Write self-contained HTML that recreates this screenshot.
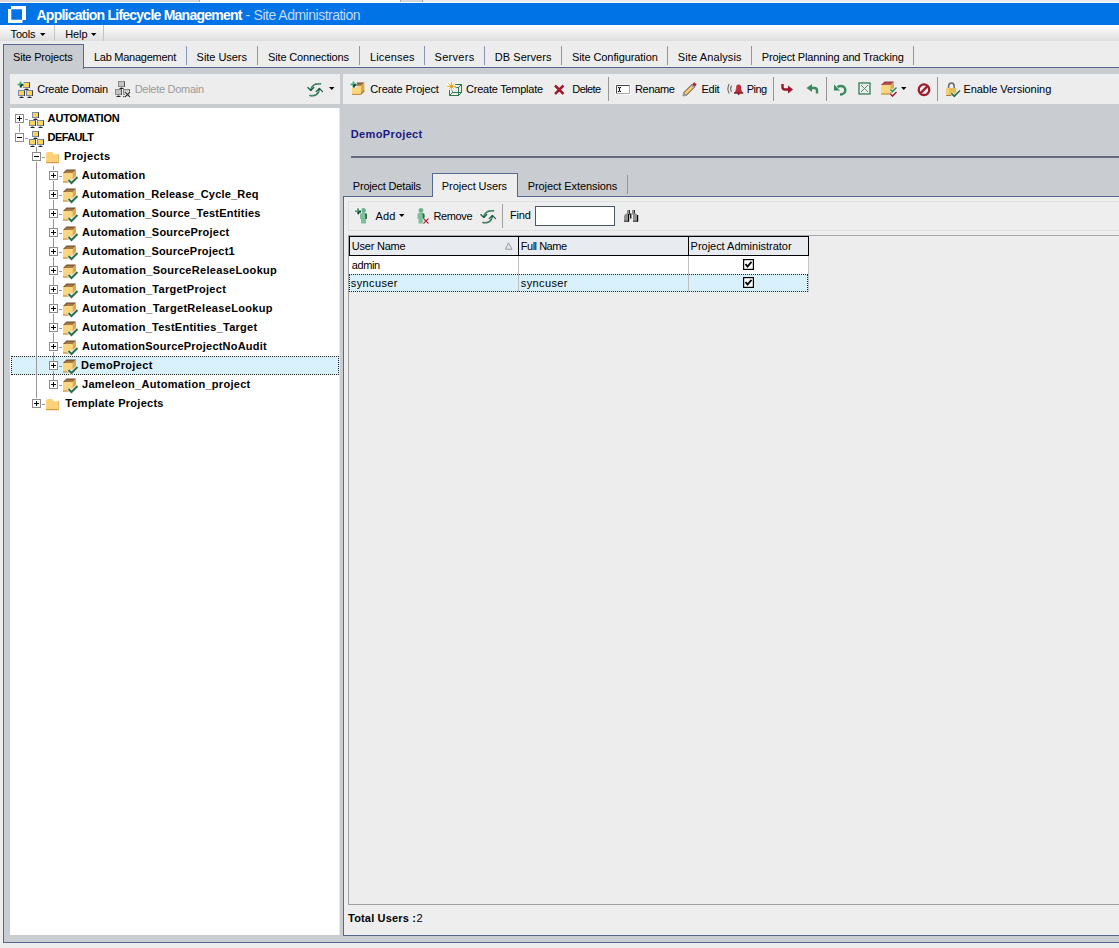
<!DOCTYPE html>
<html><head><meta charset="utf-8"><style>
html,body{margin:0;padding:0}
body{width:1119px;height:948px;overflow:hidden;position:relative;background:#ededed;font-family:"Liberation Sans",sans-serif}
.a{position:absolute}
.t{white-space:pre}
svg{overflow:visible}
</style></head><body>
<div class="a" style="left:0px;top:0px;width:1119px;height:3px;background:#ececec;"></div>
<div class="a" style="left:0px;top:0px;width:200px;height:2px;background:#d9d9d9;border-right:1px solid #a8a8a8;box-sizing:border-box"></div>
<div class="a" style="left:200px;top:0px;width:200px;height:2px;background:#ffffff;"></div>
<div class="a" style="left:400px;top:0px;width:23px;height:2px;background:#d9d9d9;border-left:1px solid #a8a8a8;border-right:1px solid #a8a8a8;box-sizing:border-box"></div>
<div class="a" style="left:0px;top:2px;width:1119px;height:1px;background:#fafafa;"></div>
<div class="a" style="left:0px;top:3px;width:1119px;height:22px;background:#0073e7;"></div>
<svg class="a" style="left:0;top:0" width="30" height="26"><path d="M11 6H26V20H22.5V23H8V9H11Z M11.3 9.2V19.8H22V9.2Z" fill="#fff" fill-rule="evenodd"/></svg>
<div class="a" style="left:0px;top:25px;width:1119px;height:16px;background:linear-gradient(#ffffff,#f4f4f4 30%,#dedede);"></div>
<div class="a" style="left:54px;top:25px;width:1px;height:16px;background:#c4c4c4;"></div>
<div class="a" style="left:103px;top:25px;width:1px;height:16px;background:#c4c4c4;"></div>
<svg class="a" style="left:40px;top:33px" width="6" height="4"><path d="M0 0H5.5L2.75 3Z" fill="#000"/></svg>
<svg class="a" style="left:91px;top:33px" width="6" height="4"><path d="M0 0H5.5L2.75 3Z" fill="#000"/></svg>
<div class="a" style="left:0px;top:41px;width:1119px;height:27px;background:#ededed;"></div>
<div class="a" style="left:3px;top:67px;width:1116px;height:1px;background:#56688f;"></div>
<div class="a" style="left:186px;top:46px;width:1px;height:19px;background:#8796b4;"></div>
<div class="a" style="left:257px;top:46px;width:1px;height:19px;background:#8796b4;"></div>
<div class="a" style="left:359px;top:46px;width:1px;height:19px;background:#8796b4;"></div>
<div class="a" style="left:424px;top:46px;width:1px;height:19px;background:#8796b4;"></div>
<div class="a" style="left:484px;top:46px;width:1px;height:19px;background:#8796b4;"></div>
<div class="a" style="left:561px;top:46px;width:1px;height:19px;background:#8796b4;"></div>
<div class="a" style="left:667px;top:46px;width:1px;height:19px;background:#8796b4;"></div>
<div class="a" style="left:751px;top:46px;width:1px;height:19px;background:#8796b4;"></div>
<div class="a" style="left:913px;top:46px;width:1px;height:19px;background:#8796b4;"></div>
<div class="a" style="left:3px;top:68px;width:1116px;height:875px;background:#c9ccd1;border-left:1px solid #56688f;border-bottom:1px solid #56688f;box-sizing:border-box"></div>
<div class="a" style="left:3px;top:44px;width:81px;height:25px;background:#c9ccd1;border:1px solid #56688f;border-bottom:none;box-sizing:border-box"></div>
<div class="a" style="left:10px;top:74px;width:330px;height:30px;background:#ededed;"></div>
<div class="a" style="left:10px;top:108px;width:329px;height:827px;background:#ffffff;"></div>
<div class="a" style="left:339px;top:108px;width:1px;height:827px;background:#e6e7ea;"></div>
<div class="a" style="left:343px;top:74px;width:776px;height:30px;background:#ededed;"></div>
<div class="a" style="left:351px;top:156px;width:768px;height:2px;background:#636b7b;"></div>
<div class="a" style="left:343px;top:196px;width:776px;height:740px;background:#eeeeee;border-left:1px solid #56688f;border-top:1px solid #56688f;border-bottom:1px solid #56688f;box-sizing:border-box"></div>
<div class="a" style="left:432px;top:173px;width:86px;height:24px;background:#eeeeee;border:1px solid #56688f;border-bottom:none;box-sizing:border-box"></div>
<div class="a" style="left:627px;top:175px;width:1px;height:19px;background:#8796b4;"></div>
<div class="a" style="left:348px;top:201px;width:771px;height:30px;background:#eeeeee;border:1px solid #e0e0e0;border-right:none;box-sizing:border-box"></div>
<div class="a" style="left:502px;top:204px;width:1px;height:24px;background:#a0a0a0;"></div>
<div class="a" style="left:535px;top:206px;width:80px;height:20px;background:#ffffff;border:1px solid #4a5566;box-sizing:border-box"></div>
<div class="a" style="left:348px;top:235px;width:771px;height:670px;background:#ededed;border-left:1px solid #a0a0a0;border-top:1px solid #a8a8a8;border-bottom:1px solid #a0a0a0;box-sizing:border-box"></div>
<div class="a" style="left:349px;top:236px;width:460px;height:20px;background:#e8ecf0;border:1px solid #000;box-sizing:border-box"></div>
<div class="a" style="left:518px;top:236px;width:1px;height:20px;background:#000;"></div>
<div class="a" style="left:688px;top:236px;width:1px;height:20px;background:#000;"></div>
<div class="a" style="left:349px;top:256px;width:459px;height:18px;background:#ffffff;"></div>
<div class="a" style="left:349px;top:274px;width:459px;height:18px;background:#d9f1fc;"></div>
<div class="a" style="left:518px;top:256px;width:1px;height:36px;background:#c0c0c0;"></div>
<div class="a" style="left:688px;top:256px;width:1px;height:36px;background:#c0c0c0;"></div>
<div class="a" style="left:808px;top:256px;width:1px;height:36px;background:#c8c8c8;"></div>
<div class="a" style="left:349px;top:274px;width:459px;height:18px;background:transparent;border:1px dotted #222;box-sizing:border-box"></div>
<div class="a" style="left:11px;top:356px;width:328px;height:19px;background:#d9f1fc;"></div>
<div class="a" style="left:11px;top:356px;width:328px;height:19px;background:transparent;border:1px dotted #222;box-sizing:border-box"></div>
<svg class="a" style="left:17px;top:81px" width="17" height="17" viewBox="0 0 17 17"><rect x="6" y="1" width="7" height="6" fill="#7d8aa0"/><rect x="12" y="1.5" width="1" height="5.5" fill="#3a4350"/><rect x="7" y="2" width="5" height="4" fill="#ffd35c"/><rect x="8.5" y="7" width="2" height="1" fill="#8d98aa"/><rect x="7.5" y="8" width="4" height="1" fill="#1e2428"/><rect x="1" y="9" width="7" height="6" fill="#7d8aa0"/><rect x="7" y="9.5" width="1" height="5.5" fill="#3a4350"/><rect x="2" y="10" width="5" height="4" fill="#ffd35c"/><rect x="3.5" y="15" width="2" height="1" fill="#8d98aa"/><rect x="2.5" y="16" width="4" height="1" fill="#1e2428"/><rect x="9" y="9" width="7" height="6" fill="#7d8aa0"/><rect x="15" y="9.5" width="1" height="5.5" fill="#3a4350"/><rect x="10" y="10" width="5" height="4" fill="#ffd35c"/><rect x="11.5" y="15" width="2" height="1" fill="#8d98aa"/><rect x="10.5" y="16" width="4" height="1" fill="#1e2428"/><path d="M0.0 3.5H7.0M3.5 0.0V7.0" stroke="#fff" stroke-width="4"/><path d="M0.5 3.5H6.5M3.5 0.5V6.5" stroke="#4aa878" stroke-width="2"/><path d="M4.0 4.0H6.5M4.0 4.0V6.5" stroke="#0e3e28" stroke-width="1.6"/></svg>
<svg class="a" style="left:114px;top:81px" width="16" height="16" viewBox="0 0 16 16"><rect x="4" y="0" width="7" height="6" fill="#8a8a8a"/><rect x="10" y="0.5" width="1" height="5.5" fill="#555"/><rect x="5" y="1" width="5" height="4" fill="#c4c4c4"/><rect x="6.5" y="6" width="2" height="1" fill="#999"/><rect x="5.5" y="7" width="4" height="1" fill="#222"/><rect x="1" y="8" width="7" height="6" fill="#8a8a8a"/><rect x="7" y="8.5" width="1" height="5.5" fill="#555"/><rect x="2" y="9" width="5" height="4" fill="#c4c4c4"/><rect x="3.5" y="14" width="2" height="1" fill="#999"/><rect x="2.5" y="15" width="4" height="1" fill="#222"/><rect x="9" y="8" width="7" height="6" fill="#8a8a8a"/><rect x="15" y="8.5" width="1" height="5.5" fill="#555"/><rect x="10" y="9" width="5" height="4" fill="#c4c4c4"/><rect x="11.5" y="14" width="2" height="1" fill="#999"/><rect x="10.5" y="15" width="4" height="1" fill="#222"/></svg>
<svg class="a" style="left:114px;top:81px" width="18" height="17" viewBox="0 0 18 17"><path d="M11 11 L16 16 M16 11 L11 16" stroke="#fff" stroke-width="3"/><path d="M11 11 L16 16 M16 11 L11 16" stroke="#333" stroke-width="1.1"/><rect x="9" y="15" width="1.2" height="1.2" fill="#444"/></svg>
<svg class="a" style="left:307px;top:82px" width="17" height="16" viewBox="0 0 17 16"><g fill="none" stroke-linecap="round" stroke-linejoin="round"><path d="M13.5 1.8 C8.5 1 4.5 3.2 3.8 8.3" stroke="#1e5a40" stroke-width="1.5"/><path d="M13.3 1.5 C8.5 0.8 4.3 3 3.6 7.8" stroke="#6cc49a" stroke-width="0.6"/><path d="M0.8 5.6 L3.8 8.4 L6.8 5.6" stroke="#1d5e40" stroke-width="1.3"/><path d="M3 13.6 C8 14.4 11.8 12.2 12.4 6.8" stroke="#1e5a40" stroke-width="1.5"/><path d="M3.2 13.3 C8 14.1 11.5 12 12.1 7" stroke="#6cc49a" stroke-width="0.6"/><path d="M9.2 9.6 L12.4 6.4 L15.5 9.6" stroke="#1d5e40" stroke-width="1.3"/></g></svg>
<svg class="a" style="left:329px;top:87px" width="6" height="4" viewBox="0 0 6 4"><path d="M0 0H5.5L2.75 3Z" fill="#000"/></svg>
<svg class="a" style="left:350px;top:81px" width="16" height="15" viewBox="0 0 16 15"><g transform="translate(2,1.5) scale(0.95)"><path d="M0 3.5 L3.5 0 H13 L9.5 3.5Z" fill="#7a5230"/><path d="M1.5 3.5 L3.8 1.2 H11.5 L9.5 3.5Z" fill="#a67a48"/><path d="M0 3.5H9.5V13H0Z" fill="#fcd67e"/><path d="M0 12H9.5V13H0Z" fill="#b88236"/><path d="M9.5 3.5 L13 0 V9.5 L9.5 13Z" fill="#dca848"/><path d="M9.5 11 L13 7.5 V9.5 L9.5 13Z" fill="#a8782e"/></g><path d="M0.0 3.5H7.0M3.5 0.0V7.0" stroke="#fff" stroke-width="4"/><path d="M0.5 3.5H6.5M3.5 0.5V6.5" stroke="#4aa878" stroke-width="2"/><path d="M4.0 4.0H6.5M4.0 4.0V6.5" stroke="#0e3e28" stroke-width="1.6"/></svg>
<svg class="a" style="left:446px;top:81px" width="17" height="16" viewBox="0 0 17 16"><g fill="none" stroke="#2f7a50" stroke-width="1"><rect x="3.5" y="6.5" width="9" height="8"/><rect x="6.5" y="3.5" width="9" height="8"/><path d="M3.5 14.5 L6.5 11.5 M12.5 14.5 L15.5 11.5 M12.5 6.5 L15.5 3.5 M3.5 6.5 L6.5 3.5"/></g><g stroke="#fff" stroke-width="2.6" stroke-linecap="round"><path d="M5.4 1.2V9.6M1.2 5.3H9.6M2.6 2.5L8.2 8.1M8.2 2.5L2.6 8.1"/></g><g stroke="#f2b23c" stroke-width="1.2" stroke-linecap="round"><path d="M5.4 1.2V9.6M1.2 5.3H9.6"/><path d="M2.6 2.5L8.2 8.1M8.2 2.5L2.6 8.1" stroke-width="1"/></g><circle cx="5.4" cy="5.3" r="1.4" fill="#d8961e"/></svg>
<svg class="a" style="left:553px;top:84px" width="13" height="12" viewBox="0 0 13 12"><path d="M2 1.5 L10.5 10 M10.5 1.5 L2 10" stroke="#fff" stroke-width="4"/><path d="M2 1.5 L10.5 10 M10.5 1.5 L2 10" stroke="#a01c32" stroke-width="2.6"/></svg>
<div class="a" style="left:608px;top:77px;width:1px;height:24px;background:#959595"></div>
<svg class="a" style="left:615px;top:84px" width="16" height="12" viewBox="0 0 16 12"><rect x="0" y="0" width="16" height="11" fill="#fff" opacity="0.7"/><rect x="1" y="1" width="14" height="9" fill="#fff"/><path d="M1.5 10 V1.5 H15" fill="none" stroke="#454545"/><path d="M14.5 1.5 V9.5 H1" fill="none" stroke="#a8a8a8"/><path d="M4.5 3.5 V7.5" stroke="#000" stroke-width="1.2"/><rect x="3" y="3" width="1" height="1" fill="#000"/><rect x="5" y="3" width="1" height="1" fill="#000"/><rect x="3" y="7" width="1" height="1" fill="#000"/><rect x="5" y="7" width="1" height="1" fill="#000"/></svg>
<svg class="a" style="left:682px;top:82px" width="16" height="15" viewBox="0 0 16 15"><path d="M2.5 12.5 L11.5 3.5" stroke="#333" stroke-width="4.2" stroke-linecap="butt"/><path d="M2.5 12.5 L11.5 3.5" stroke="#f8cf6a" stroke-width="3"/><path d="M11 4 L13.5 1.5" stroke="#a82838" stroke-width="3.5"/><path d="M10.2 4.8 L11.6 3.4" stroke="#9aa0a8" stroke-width="3.5"/><path d="M1 14 L3.2 11.8" stroke="#8a9098" stroke-width="2.2"/></svg>
<svg class="a" style="left:726px;top:83px" width="18" height="13" viewBox="0 0 18 13"><g fill="none" stroke="#6a6a6a" stroke-width="1.1"><path d="M3.2 1 Q0.6 5.5 3.2 10.5"/><path d="M5.6 2.6 Q3.6 5.6 5.6 8.8"/></g><path d="M8.3 9.6 Q10 8.6 10 5.2 Q10 1.6 12.6 1.6 Q15.2 1.6 15.2 5.2 Q15.2 8.6 16.9 9.6Z" fill="#b82c3c"/><path d="M11.2 2.5 Q10.6 4 10.8 7" stroke="#d86070" stroke-width="0.8" fill="none"/><rect x="8" y="9.2" width="9.2" height="1.5" fill="#7a1020"/><circle cx="12.6" cy="11.1" r="1" fill="#7a1020"/></svg>
<div class="a" style="left:773px;top:77px;width:1px;height:24px;background:#959595"></div>
<svg class="a" style="left:781px;top:83px" width="13" height="12" viewBox="0 0 13 12"><path d="M1.5 1 V4 Q1.5 6.5 4 6.5 H8" fill="none" stroke="#a0142a" stroke-width="2.4"/><path d="M7 2.5 L12 6.5 L7 10.5Z" fill="#a0142a"/></svg>
<svg class="a" style="left:806px;top:83px" width="13" height="12" viewBox="0 0 13 12"><path d="M11 10.5 V7.5 Q11 5 8.5 5 H5" fill="none" stroke="#3a8a60" stroke-width="2.4"/><path d="M6 1 L0.5 5 L6 9Z" fill="#3a8a60"/></svg>
<div class="a" style="left:826px;top:77px;width:1px;height:24px;background:#959595"></div>
<svg class="a" style="left:833px;top:83px" width="15" height="13" viewBox="0 0 15 13"><path d="M4.5 4 Q8 2 11 4 Q13 6 12 9 Q10.5 11.5 7 11.5" fill="none" stroke="#3a8a60" stroke-width="2.4"/><path d="M1 1.5 V7.5 H7Z" fill="#3a8a60"/></svg>
<svg class="a" style="left:858px;top:82px" width="13" height="13" viewBox="0 0 13 13"><rect x="1" y="1" width="11" height="11" fill="none" stroke="#2f8050" stroke-width="1.3"/><path d="M3 3L10 10M10 3L3 10" stroke="#3a9060" stroke-width="0.9"/></svg>
<svg class="a" style="left:881px;top:80px" width="18" height="19" viewBox="0 0 18 19"><g transform="translate(0,1.5) scale(1.0)"><path d="M0 3.5 L3.5 0 H13 L9.5 3.5Z" fill="#9a3a40"/><path d="M1.5 3.5 L3.8 1.2 H11.5 L9.5 3.5Z" fill="#b85058"/><path d="M0 3.5H9.5V13H0Z" fill="#fcd67e"/><path d="M0 12H9.5V13H0Z" fill="#b88236"/><path d="M9.5 3.5 L13 0 V9.5 L9.5 13Z" fill="#dca848"/><path d="M9.5 11 L13 7.5 V9.5 L9.5 13Z" fill="#a8782e"/></g><path d="M9.5 9.5 L11.5 11.5 L15.5 7.5" fill="none" stroke="#fff" stroke-width="3"/><path d="M9.5 9.5 L11.5 11.5 L15.5 7.5" fill="none" stroke="#2f8a60" stroke-width="1.6"/><path d="M9.5 14 L11.5 16 L15.5 12" fill="none" stroke="#fff" stroke-width="3"/><path d="M9.5 14 L11.5 16 L15.5 12" fill="none" stroke="#a01c32" stroke-width="1.6"/></svg>
<svg class="a" style="left:901px;top:87px" width="6" height="4" viewBox="0 0 6 4"><path d="M0 0H5.5L2.75 3Z" fill="#000"/></svg>
<svg class="a" style="left:916.5px;top:83px" width="15" height="14" viewBox="0 0 15 14"><circle cx="7" cy="6.7" r="5.3" fill="none" stroke="#a01c2a" stroke-width="2.3"/><path d="M3.2 10.5 L10.8 2.9" stroke="#a01c2a" stroke-width="2.3"/></svg>
<div class="a" style="left:937px;top:77px;width:1px;height:24px;background:#959595"></div>
<svg class="a" style="left:945px;top:82px" width="16" height="16" viewBox="0 0 16 16"><path d="M3.6 6.5 V4.3 Q3.6 0.9 6.4 0.9 Q9.2 0.9 9.2 4.3 V6.5" fill="none" stroke="#6c6c6c" stroke-width="1.5"/><rect x="1.2" y="6" width="10" height="8" fill="#e4bc58"/><rect x="1.2" y="6" width="3" height="8" fill="#f0d078"/><rect x="1.2" y="13" width="10" height="1" fill="#a87a30"/><path d="M6.3 11.3 L9.3 14.2 L15 8.5" fill="none" stroke="#fff" stroke-width="3"/><path d="M6.3 11.3 L9.3 14.2 L15 8.5" fill="none" stroke="#2a6e4e" stroke-width="1.7"/></svg>
<svg class="a" style="left:15px;top:114px" width="9" height="9" viewBox="0 0 9 9"><rect x="0.5" y="0.5" width="8" height="8" fill="#fff" stroke="#8c8c8c"/><rect x="2" y="4" width="5" height="1" fill="#000"/><rect x="4" y="2" width="1" height="5" fill="#000"/></svg>
<div class="a" style="left:25px;top:119px;width:3px;height:1px;background:#979797"></div>
<svg class="a" style="left:28px;top:112px" width="16" height="16" viewBox="0 0 16 16"><rect x="4" y="0" width="7" height="6" fill="#7d8aa0"/><rect x="10" y="0.5" width="1" height="5.5" fill="#3a4350"/><rect x="5" y="1" width="5" height="4" fill="#ffd35c"/><rect x="6.5" y="6" width="2" height="1" fill="#8d98aa"/><rect x="5.5" y="7" width="4" height="1" fill="#1e2428"/><rect x="1" y="8" width="7" height="6" fill="#7d8aa0"/><rect x="7" y="8.5" width="1" height="5.5" fill="#3a4350"/><rect x="2" y="9" width="5" height="4" fill="#ffd35c"/><rect x="3.5" y="14" width="2" height="1" fill="#8d98aa"/><rect x="2.5" y="15" width="4" height="1" fill="#1e2428"/><rect x="9" y="8" width="7" height="6" fill="#7d8aa0"/><rect x="15" y="8.5" width="1" height="5.5" fill="#3a4350"/><rect x="10" y="9" width="5" height="4" fill="#ffd35c"/><rect x="11.5" y="14" width="2" height="1" fill="#8d98aa"/><rect x="10.5" y="15" width="4" height="1" fill="#1e2428"/></svg>
<svg class="a" style="left:15px;top:133px" width="9" height="9" viewBox="0 0 9 9"><rect x="0.5" y="0.5" width="8" height="8" fill="#fff" stroke="#8c8c8c"/><rect x="2" y="4" width="5" height="1" fill="#000"/></svg>
<div class="a" style="left:25px;top:138px;width:3px;height:1px;background:#979797"></div>
<svg class="a" style="left:28px;top:131px" width="16" height="16" viewBox="0 0 16 16"><rect x="4" y="0" width="7" height="6" fill="#7d8aa0"/><rect x="10" y="0.5" width="1" height="5.5" fill="#3a4350"/><rect x="5" y="1" width="5" height="4" fill="#ffd35c"/><rect x="6.5" y="6" width="2" height="1" fill="#8d98aa"/><rect x="5.5" y="7" width="4" height="1" fill="#1e2428"/><rect x="1" y="8" width="7" height="6" fill="#7d8aa0"/><rect x="7" y="8.5" width="1" height="5.5" fill="#3a4350"/><rect x="2" y="9" width="5" height="4" fill="#ffd35c"/><rect x="3.5" y="14" width="2" height="1" fill="#8d98aa"/><rect x="2.5" y="15" width="4" height="1" fill="#1e2428"/><rect x="9" y="8" width="7" height="6" fill="#7d8aa0"/><rect x="15" y="8.5" width="1" height="5.5" fill="#3a4350"/><rect x="10" y="9" width="5" height="4" fill="#ffd35c"/><rect x="11.5" y="14" width="2" height="1" fill="#8d98aa"/><rect x="10.5" y="15" width="4" height="1" fill="#1e2428"/></svg>
<svg class="a" style="left:32px;top:152px" width="9" height="9" viewBox="0 0 9 9"><rect x="0.5" y="0.5" width="8" height="8" fill="#fff" stroke="#8c8c8c"/><rect x="2" y="4" width="5" height="1" fill="#000"/></svg>
<div class="a" style="left:42px;top:157px;width:3px;height:1px;background:#979797"></div>
<svg class="a" style="left:46px;top:152px" width="14" height="12" viewBox="0 0 14 12"><path d="M0 2.2 Q0 0 2 0 H5.5 Q6.5 0 7.2 1.2 L7.8 2.2 H13 V11 H0Z" fill="#fdd27a"/><rect x="0" y="10" width="13" height="1.2" fill="#d79a3a"/><rect x="12.2" y="2.2" width="0.8" height="8.5" fill="#e8b458"/></svg>
<svg class="a" style="left:49px;top:171px" width="9" height="9" viewBox="0 0 9 9"><rect x="0.5" y="0.5" width="8" height="8" fill="#fff" stroke="#8c8c8c"/><rect x="2" y="4" width="5" height="1" fill="#000"/><rect x="4" y="2" width="1" height="5" fill="#000"/></svg>
<div class="a" style="left:59px;top:176px;width:3px;height:1px;background:#979797"></div>
<svg class="a" style="left:63px;top:169px" width="16" height="16" viewBox="0 0 16 16"><g transform="translate(0,0.5) scale(1.0)"><path d="M0 3.5 L3.5 0 H13 L9.5 3.5Z" fill="#7a5230"/><path d="M1.5 3.5 L3.8 1.2 H11.5 L9.5 3.5Z" fill="#a67a48"/><path d="M0 3.5H9.5V13H0Z" fill="#fcd67e"/><path d="M0 12H9.5V13H0Z" fill="#b88236"/><path d="M9.5 3.5 L13 0 V9.5 L9.5 13Z" fill="#dca848"/><path d="M9.5 11 L13 7.5 V9.5 L9.5 13Z" fill="#a8782e"/></g><path d="M5.5 11.0 L8.5 14.0 L14.5 8.0" fill="none" stroke="#fff" stroke-width="3.5"/><path d="M5.5 11.0 L8.5 14.0 L14.5 8.0" fill="none" stroke="#2a6e4e" stroke-width="2"/></svg>
<svg class="a" style="left:49px;top:190px" width="9" height="9" viewBox="0 0 9 9"><rect x="0.5" y="0.5" width="8" height="8" fill="#fff" stroke="#8c8c8c"/><rect x="2" y="4" width="5" height="1" fill="#000"/><rect x="4" y="2" width="1" height="5" fill="#000"/></svg>
<div class="a" style="left:59px;top:195px;width:3px;height:1px;background:#979797"></div>
<svg class="a" style="left:63px;top:188px" width="16" height="16" viewBox="0 0 16 16"><g transform="translate(0,0.5) scale(1.0)"><path d="M0 3.5 L3.5 0 H13 L9.5 3.5Z" fill="#7a5230"/><path d="M1.5 3.5 L3.8 1.2 H11.5 L9.5 3.5Z" fill="#a67a48"/><path d="M0 3.5H9.5V13H0Z" fill="#fcd67e"/><path d="M0 12H9.5V13H0Z" fill="#b88236"/><path d="M9.5 3.5 L13 0 V9.5 L9.5 13Z" fill="#dca848"/><path d="M9.5 11 L13 7.5 V9.5 L9.5 13Z" fill="#a8782e"/></g><path d="M5.5 11.0 L8.5 14.0 L14.5 8.0" fill="none" stroke="#fff" stroke-width="3.5"/><path d="M5.5 11.0 L8.5 14.0 L14.5 8.0" fill="none" stroke="#2a6e4e" stroke-width="2"/></svg>
<svg class="a" style="left:49px;top:209px" width="9" height="9" viewBox="0 0 9 9"><rect x="0.5" y="0.5" width="8" height="8" fill="#fff" stroke="#8c8c8c"/><rect x="2" y="4" width="5" height="1" fill="#000"/><rect x="4" y="2" width="1" height="5" fill="#000"/></svg>
<div class="a" style="left:59px;top:214px;width:3px;height:1px;background:#979797"></div>
<svg class="a" style="left:63px;top:207px" width="16" height="16" viewBox="0 0 16 16"><g transform="translate(0,0.5) scale(1.0)"><path d="M0 3.5 L3.5 0 H13 L9.5 3.5Z" fill="#7a5230"/><path d="M1.5 3.5 L3.8 1.2 H11.5 L9.5 3.5Z" fill="#a67a48"/><path d="M0 3.5H9.5V13H0Z" fill="#fcd67e"/><path d="M0 12H9.5V13H0Z" fill="#b88236"/><path d="M9.5 3.5 L13 0 V9.5 L9.5 13Z" fill="#dca848"/><path d="M9.5 11 L13 7.5 V9.5 L9.5 13Z" fill="#a8782e"/></g><path d="M5.5 11.0 L8.5 14.0 L14.5 8.0" fill="none" stroke="#fff" stroke-width="3.5"/><path d="M5.5 11.0 L8.5 14.0 L14.5 8.0" fill="none" stroke="#2a6e4e" stroke-width="2"/></svg>
<svg class="a" style="left:49px;top:228px" width="9" height="9" viewBox="0 0 9 9"><rect x="0.5" y="0.5" width="8" height="8" fill="#fff" stroke="#8c8c8c"/><rect x="2" y="4" width="5" height="1" fill="#000"/><rect x="4" y="2" width="1" height="5" fill="#000"/></svg>
<div class="a" style="left:59px;top:233px;width:3px;height:1px;background:#979797"></div>
<svg class="a" style="left:63px;top:226px" width="16" height="16" viewBox="0 0 16 16"><g transform="translate(0,0.5) scale(1.0)"><path d="M0 3.5 L3.5 0 H13 L9.5 3.5Z" fill="#7a5230"/><path d="M1.5 3.5 L3.8 1.2 H11.5 L9.5 3.5Z" fill="#a67a48"/><path d="M0 3.5H9.5V13H0Z" fill="#fcd67e"/><path d="M0 12H9.5V13H0Z" fill="#b88236"/><path d="M9.5 3.5 L13 0 V9.5 L9.5 13Z" fill="#dca848"/><path d="M9.5 11 L13 7.5 V9.5 L9.5 13Z" fill="#a8782e"/></g><path d="M5.5 11.0 L8.5 14.0 L14.5 8.0" fill="none" stroke="#fff" stroke-width="3.5"/><path d="M5.5 11.0 L8.5 14.0 L14.5 8.0" fill="none" stroke="#2a6e4e" stroke-width="2"/></svg>
<svg class="a" style="left:49px;top:247px" width="9" height="9" viewBox="0 0 9 9"><rect x="0.5" y="0.5" width="8" height="8" fill="#fff" stroke="#8c8c8c"/><rect x="2" y="4" width="5" height="1" fill="#000"/><rect x="4" y="2" width="1" height="5" fill="#000"/></svg>
<div class="a" style="left:59px;top:252px;width:3px;height:1px;background:#979797"></div>
<svg class="a" style="left:63px;top:245px" width="16" height="16" viewBox="0 0 16 16"><g transform="translate(0,0.5) scale(1.0)"><path d="M0 3.5 L3.5 0 H13 L9.5 3.5Z" fill="#7a5230"/><path d="M1.5 3.5 L3.8 1.2 H11.5 L9.5 3.5Z" fill="#a67a48"/><path d="M0 3.5H9.5V13H0Z" fill="#fcd67e"/><path d="M0 12H9.5V13H0Z" fill="#b88236"/><path d="M9.5 3.5 L13 0 V9.5 L9.5 13Z" fill="#dca848"/><path d="M9.5 11 L13 7.5 V9.5 L9.5 13Z" fill="#a8782e"/></g><path d="M5.5 11.0 L8.5 14.0 L14.5 8.0" fill="none" stroke="#fff" stroke-width="3.5"/><path d="M5.5 11.0 L8.5 14.0 L14.5 8.0" fill="none" stroke="#2a6e4e" stroke-width="2"/></svg>
<svg class="a" style="left:49px;top:266px" width="9" height="9" viewBox="0 0 9 9"><rect x="0.5" y="0.5" width="8" height="8" fill="#fff" stroke="#8c8c8c"/><rect x="2" y="4" width="5" height="1" fill="#000"/><rect x="4" y="2" width="1" height="5" fill="#000"/></svg>
<div class="a" style="left:59px;top:271px;width:3px;height:1px;background:#979797"></div>
<svg class="a" style="left:63px;top:264px" width="16" height="16" viewBox="0 0 16 16"><g transform="translate(0,0.5) scale(1.0)"><path d="M0 3.5 L3.5 0 H13 L9.5 3.5Z" fill="#7a5230"/><path d="M1.5 3.5 L3.8 1.2 H11.5 L9.5 3.5Z" fill="#a67a48"/><path d="M0 3.5H9.5V13H0Z" fill="#fcd67e"/><path d="M0 12H9.5V13H0Z" fill="#b88236"/><path d="M9.5 3.5 L13 0 V9.5 L9.5 13Z" fill="#dca848"/><path d="M9.5 11 L13 7.5 V9.5 L9.5 13Z" fill="#a8782e"/></g><path d="M5.5 11.0 L8.5 14.0 L14.5 8.0" fill="none" stroke="#fff" stroke-width="3.5"/><path d="M5.5 11.0 L8.5 14.0 L14.5 8.0" fill="none" stroke="#2a6e4e" stroke-width="2"/></svg>
<svg class="a" style="left:49px;top:285px" width="9" height="9" viewBox="0 0 9 9"><rect x="0.5" y="0.5" width="8" height="8" fill="#fff" stroke="#8c8c8c"/><rect x="2" y="4" width="5" height="1" fill="#000"/><rect x="4" y="2" width="1" height="5" fill="#000"/></svg>
<div class="a" style="left:59px;top:290px;width:3px;height:1px;background:#979797"></div>
<svg class="a" style="left:63px;top:283px" width="16" height="16" viewBox="0 0 16 16"><g transform="translate(0,0.5) scale(1.0)"><path d="M0 3.5 L3.5 0 H13 L9.5 3.5Z" fill="#7a5230"/><path d="M1.5 3.5 L3.8 1.2 H11.5 L9.5 3.5Z" fill="#a67a48"/><path d="M0 3.5H9.5V13H0Z" fill="#fcd67e"/><path d="M0 12H9.5V13H0Z" fill="#b88236"/><path d="M9.5 3.5 L13 0 V9.5 L9.5 13Z" fill="#dca848"/><path d="M9.5 11 L13 7.5 V9.5 L9.5 13Z" fill="#a8782e"/></g><path d="M5.5 11.0 L8.5 14.0 L14.5 8.0" fill="none" stroke="#fff" stroke-width="3.5"/><path d="M5.5 11.0 L8.5 14.0 L14.5 8.0" fill="none" stroke="#2a6e4e" stroke-width="2"/></svg>
<svg class="a" style="left:49px;top:304px" width="9" height="9" viewBox="0 0 9 9"><rect x="0.5" y="0.5" width="8" height="8" fill="#fff" stroke="#8c8c8c"/><rect x="2" y="4" width="5" height="1" fill="#000"/><rect x="4" y="2" width="1" height="5" fill="#000"/></svg>
<div class="a" style="left:59px;top:309px;width:3px;height:1px;background:#979797"></div>
<svg class="a" style="left:63px;top:302px" width="16" height="16" viewBox="0 0 16 16"><g transform="translate(0,0.5) scale(1.0)"><path d="M0 3.5 L3.5 0 H13 L9.5 3.5Z" fill="#7a5230"/><path d="M1.5 3.5 L3.8 1.2 H11.5 L9.5 3.5Z" fill="#a67a48"/><path d="M0 3.5H9.5V13H0Z" fill="#fcd67e"/><path d="M0 12H9.5V13H0Z" fill="#b88236"/><path d="M9.5 3.5 L13 0 V9.5 L9.5 13Z" fill="#dca848"/><path d="M9.5 11 L13 7.5 V9.5 L9.5 13Z" fill="#a8782e"/></g><path d="M5.5 11.0 L8.5 14.0 L14.5 8.0" fill="none" stroke="#fff" stroke-width="3.5"/><path d="M5.5 11.0 L8.5 14.0 L14.5 8.0" fill="none" stroke="#2a6e4e" stroke-width="2"/></svg>
<svg class="a" style="left:49px;top:323px" width="9" height="9" viewBox="0 0 9 9"><rect x="0.5" y="0.5" width="8" height="8" fill="#fff" stroke="#8c8c8c"/><rect x="2" y="4" width="5" height="1" fill="#000"/><rect x="4" y="2" width="1" height="5" fill="#000"/></svg>
<div class="a" style="left:59px;top:328px;width:3px;height:1px;background:#979797"></div>
<svg class="a" style="left:63px;top:321px" width="16" height="16" viewBox="0 0 16 16"><g transform="translate(0,0.5) scale(1.0)"><path d="M0 3.5 L3.5 0 H13 L9.5 3.5Z" fill="#7a5230"/><path d="M1.5 3.5 L3.8 1.2 H11.5 L9.5 3.5Z" fill="#a67a48"/><path d="M0 3.5H9.5V13H0Z" fill="#fcd67e"/><path d="M0 12H9.5V13H0Z" fill="#b88236"/><path d="M9.5 3.5 L13 0 V9.5 L9.5 13Z" fill="#dca848"/><path d="M9.5 11 L13 7.5 V9.5 L9.5 13Z" fill="#a8782e"/></g><path d="M5.5 11.0 L8.5 14.0 L14.5 8.0" fill="none" stroke="#fff" stroke-width="3.5"/><path d="M5.5 11.0 L8.5 14.0 L14.5 8.0" fill="none" stroke="#2a6e4e" stroke-width="2"/></svg>
<svg class="a" style="left:49px;top:342px" width="9" height="9" viewBox="0 0 9 9"><rect x="0.5" y="0.5" width="8" height="8" fill="#fff" stroke="#8c8c8c"/><rect x="2" y="4" width="5" height="1" fill="#000"/><rect x="4" y="2" width="1" height="5" fill="#000"/></svg>
<div class="a" style="left:59px;top:347px;width:3px;height:1px;background:#979797"></div>
<svg class="a" style="left:63px;top:340px" width="16" height="16" viewBox="0 0 16 16"><g transform="translate(0,0.5) scale(1.0)"><path d="M0 3.5 L3.5 0 H13 L9.5 3.5Z" fill="#7a5230"/><path d="M1.5 3.5 L3.8 1.2 H11.5 L9.5 3.5Z" fill="#a67a48"/><path d="M0 3.5H9.5V13H0Z" fill="#fcd67e"/><path d="M0 12H9.5V13H0Z" fill="#b88236"/><path d="M9.5 3.5 L13 0 V9.5 L9.5 13Z" fill="#dca848"/><path d="M9.5 11 L13 7.5 V9.5 L9.5 13Z" fill="#a8782e"/></g><path d="M5.5 11.0 L8.5 14.0 L14.5 8.0" fill="none" stroke="#fff" stroke-width="3.5"/><path d="M5.5 11.0 L8.5 14.0 L14.5 8.0" fill="none" stroke="#2a6e4e" stroke-width="2"/></svg>
<svg class="a" style="left:49px;top:361px" width="9" height="9" viewBox="0 0 9 9"><rect x="0.5" y="0.5" width="8" height="8" fill="#fff" stroke="#8c8c8c"/><rect x="2" y="4" width="5" height="1" fill="#000"/><rect x="4" y="2" width="1" height="5" fill="#000"/></svg>
<div class="a" style="left:59px;top:366px;width:3px;height:1px;background:#979797"></div>
<svg class="a" style="left:63px;top:359px" width="16" height="16" viewBox="0 0 16 16"><g transform="translate(0,0.5) scale(1.0)"><path d="M0 3.5 L3.5 0 H13 L9.5 3.5Z" fill="#7a5230"/><path d="M1.5 3.5 L3.8 1.2 H11.5 L9.5 3.5Z" fill="#a67a48"/><path d="M0 3.5H9.5V13H0Z" fill="#fcd67e"/><path d="M0 12H9.5V13H0Z" fill="#b88236"/><path d="M9.5 3.5 L13 0 V9.5 L9.5 13Z" fill="#dca848"/><path d="M9.5 11 L13 7.5 V9.5 L9.5 13Z" fill="#a8782e"/></g><path d="M5.5 11.0 L8.5 14.0 L14.5 8.0" fill="none" stroke="#fff" stroke-width="3.5"/><path d="M5.5 11.0 L8.5 14.0 L14.5 8.0" fill="none" stroke="#2a6e4e" stroke-width="2"/></svg>
<svg class="a" style="left:49px;top:380px" width="9" height="9" viewBox="0 0 9 9"><rect x="0.5" y="0.5" width="8" height="8" fill="#fff" stroke="#8c8c8c"/><rect x="2" y="4" width="5" height="1" fill="#000"/><rect x="4" y="2" width="1" height="5" fill="#000"/></svg>
<div class="a" style="left:59px;top:385px;width:3px;height:1px;background:#979797"></div>
<svg class="a" style="left:63px;top:378px" width="16" height="16" viewBox="0 0 16 16"><g transform="translate(0,0.5) scale(1.0)"><path d="M0 3.5 L3.5 0 H13 L9.5 3.5Z" fill="#7a5230"/><path d="M1.5 3.5 L3.8 1.2 H11.5 L9.5 3.5Z" fill="#a67a48"/><path d="M0 3.5H9.5V13H0Z" fill="#fcd67e"/><path d="M0 12H9.5V13H0Z" fill="#b88236"/><path d="M9.5 3.5 L13 0 V9.5 L9.5 13Z" fill="#dca848"/><path d="M9.5 11 L13 7.5 V9.5 L9.5 13Z" fill="#a8782e"/></g><path d="M5.5 11.0 L8.5 14.0 L14.5 8.0" fill="none" stroke="#fff" stroke-width="3.5"/><path d="M5.5 11.0 L8.5 14.0 L14.5 8.0" fill="none" stroke="#2a6e4e" stroke-width="2"/></svg>
<svg class="a" style="left:32px;top:399px" width="9" height="9" viewBox="0 0 9 9"><rect x="0.5" y="0.5" width="8" height="8" fill="#fff" stroke="#8c8c8c"/><rect x="2" y="4" width="5" height="1" fill="#000"/><rect x="4" y="2" width="1" height="5" fill="#000"/></svg>
<div class="a" style="left:42px;top:404px;width:3px;height:1px;background:#979797"></div>
<svg class="a" style="left:46px;top:399px" width="14" height="12" viewBox="0 0 14 12"><path d="M0 2.2 Q0 0 2 0 H5.5 Q6.5 0 7.2 1.2 L7.8 2.2 H13 V11 H0Z" fill="#fdd27a"/><rect x="0" y="10" width="13" height="1.2" fill="#d79a3a"/><rect x="12.2" y="2.2" width="0.8" height="8.5" fill="#e8b458"/></svg>
<div class="a" style="left:19px;top:124px;width:1px;height:8px;background:#979797"></div>
<div class="a" style="left:36px;top:147px;width:1px;height:5px;background:#979797"></div>
<div class="a" style="left:36px;top:162px;width:1px;height:236px;background:#979797"></div>
<div class="a" style="left:53px;top:166px;width:1px;height:4px;background:#979797"></div>
<div class="a" style="left:53px;top:181px;width:1px;height:9px;background:#979797"></div>
<div class="a" style="left:53px;top:200px;width:1px;height:9px;background:#979797"></div>
<div class="a" style="left:53px;top:219px;width:1px;height:9px;background:#979797"></div>
<div class="a" style="left:53px;top:238px;width:1px;height:9px;background:#979797"></div>
<div class="a" style="left:53px;top:257px;width:1px;height:9px;background:#979797"></div>
<div class="a" style="left:53px;top:276px;width:1px;height:9px;background:#979797"></div>
<div class="a" style="left:53px;top:295px;width:1px;height:9px;background:#979797"></div>
<div class="a" style="left:53px;top:314px;width:1px;height:9px;background:#979797"></div>
<div class="a" style="left:53px;top:333px;width:1px;height:9px;background:#979797"></div>
<div class="a" style="left:53px;top:352px;width:1px;height:9px;background:#979797"></div>
<div class="a" style="left:53px;top:371px;width:1px;height:9px;background:#979797"></div>
<svg class="a" style="left:354px;top:207px" width="15" height="17" viewBox="0 0 15 17"><circle cx="9.5" cy="3.5" r="2.4" fill="#6fb08a"/><path d="M6 7 Q6 6 7.5 6 H11.5 Q13 6 13 7 V12 H12 V16.5 H7 V12 H6 Z" fill="#7cc09a"/><path d="M11 6.2 Q13 6.5 13 8 V12 H11.5Z" fill="#2f6a48"/><path d="M0.5 4.2H7.5M4 0.7000000000000002V7.7" stroke="#fff" stroke-width="4"/><path d="M1 4.2H7M4 1.2000000000000002V7.2" stroke="#4aa878" stroke-width="2"/><path d="M4.5 4.7H7M4.5 4.7V7.2" stroke="#0e3e28" stroke-width="1.6"/></svg>
<svg class="a" style="left:399px;top:214px" width="6" height="4" viewBox="0 0 6 4"><path d="M0 0H5.5L2.75 3Z" fill="#000"/></svg>
<svg class="a" style="left:417px;top:208px" width="15" height="17" viewBox="0 0 15 17"><circle cx="4.0" cy="2.5" r="2.4" fill="#6fb08a"/><path d="M0.5 6 Q0.5 5 2.0 5 H6.0 Q7.5 5 7.5 6 V11 H6.5 V15.5 H1.5 V11 H0.5 Z" fill="#7cc09a"/><path d="M5.5 5.2 Q7.5 5.5 7.5 7 V11 H6.0Z" fill="#2f6a48"/><path d="M6.5 10.5 L11.5 15.5 M11.5 10.5 L6.5 15.5" stroke="#fff" stroke-width="3"/><path d="M6.5 10.5 L11.5 15.5 M11.5 10.5 L6.5 15.5" stroke="#b41c34" stroke-width="1.1"/></svg>
<svg class="a" style="left:480px;top:209px" width="17" height="16" viewBox="0 0 17 16"><g fill="none" stroke-linecap="round" stroke-linejoin="round"><path d="M13.5 1.8 C8.5 1 4.5 3.2 3.8 8.3" stroke="#1e5a40" stroke-width="1.5"/><path d="M13.3 1.5 C8.5 0.8 4.3 3 3.6 7.8" stroke="#6cc49a" stroke-width="0.6"/><path d="M0.8 5.6 L3.8 8.4 L6.8 5.6" stroke="#1d5e40" stroke-width="1.3"/><path d="M3 13.6 C8 14.4 11.8 12.2 12.4 6.8" stroke="#1e5a40" stroke-width="1.5"/><path d="M3.2 13.3 C8 14.1 11.5 12 12.1 7" stroke="#6cc49a" stroke-width="0.6"/><path d="M9.2 9.6 L12.4 6.4 L15.5 9.6" stroke="#1d5e40" stroke-width="1.3"/></g></svg>
<svg class="a" style="left:624px;top:210px" width="15" height="13" viewBox="0 0 15 13"><rect x="3" y="0" width="3" height="4.5" fill="#8a8a8a"/><rect x="5" y="0" width="1" height="4.5" fill="#333"/><rect x="8" y="0" width="3" height="4.5" fill="#8a8a8a"/><rect x="10" y="0" width="1" height="4.5" fill="#333"/><rect x="6" y="3.5" width="2" height="5" fill="#9a9a9a"/><rect x="6.2" y="3.5" width="0.9" height="5" fill="#111"/><path d="M0 5.5 L2 3.5 H5 V11.7 H0Z" fill="#8e8e8e"/><rect x="4" y="4" width="1.2" height="7.7" fill="#000"/><path d="M9 3.5 H12 L14 5.5 V11.7 H9Z" fill="#8e8e8e"/><rect x="13" y="5" width="1.2" height="6.7" fill="#000"/><rect x="0" y="10.7" width="5" height="1" fill="#3a3a3a"/><rect x="9" y="10.7" width="5" height="1" fill="#3a3a3a"/></svg>
<svg class="a" style="left:505px;top:242px" width="8" height="8" viewBox="0 0 8 8"><path d="M3.5 0.8 L7 7.2 H0.5Z" fill="none" stroke="#9a9a9a" stroke-width="1"/></svg>
<svg class="a" style="left:743px;top:259px" width="11" height="11" viewBox="0 0 11 11"><rect x="0.6" y="0.6" width="9.8" height="9.8" fill="#fff" stroke="#000" stroke-width="1.2"/><path d="M2.5 5 L4.5 7.5 L8.5 2.8" fill="none" stroke="#000" stroke-width="1.8"/></svg>
<svg class="a" style="left:743px;top:277px" width="11" height="11" viewBox="0 0 11 11"><rect x="0.6" y="0.6" width="9.8" height="9.8" fill="#fff" stroke="#000" stroke-width="1.2"/><path d="M2.5 5 L4.5 7.5 L8.5 2.8" fill="none" stroke="#000" stroke-width="1.8"/></svg>
<span class="a t" style="left:36.5px;top:7px;font-size:14px;line-height:16px;font-weight:bold;color:#fff;letter-spacing:-0.761px;">Application Lifecycle Management</span>
<span class="a t" style="left:245.6px;top:7px;font-size:14px;line-height:16px;color:#c4dafa;">-</span>
<span class="a t" style="left:253.6px;top:7px;font-size:14px;line-height:16px;color:#c4dafa;letter-spacing:-0.500px;">Site Administration</span>
<span class="a t" style="left:10.6px;top:28px;font-size:11px;line-height:13px;color:#000;letter-spacing:-0.175px;">Tools</span>
<span class="a t" style="left:65.2px;top:28px;font-size:11px;line-height:13px;color:#000;letter-spacing:-0.100px;">Help</span>
<span class="a t" style="left:13.0px;top:51px;font-size:11px;line-height:13px;color:#000;letter-spacing:-0.167px;">Site Projects</span>
<span class="a t" style="left:94.0px;top:51px;font-size:11px;line-height:13px;color:#000;letter-spacing:-0.262px;">Lab Management</span>
<span class="a t" style="left:196.6px;top:51px;font-size:11px;line-height:13px;color:#000;letter-spacing:-0.044px;">Site Users</span>
<span class="a t" style="left:268.0px;top:51px;font-size:11px;line-height:13px;color:#000;letter-spacing:-0.140px;">Site Connections</span>
<span class="a t" style="left:369.9px;top:51px;font-size:11px;line-height:13px;color:#000;letter-spacing:0.171px;">Licenses</span>
<span class="a t" style="left:434.6px;top:51px;font-size:11px;line-height:13px;color:#000;letter-spacing:0.283px;">Servers</span>
<span class="a t" style="left:494.8px;top:51px;font-size:11px;line-height:13px;color:#000;letter-spacing:0.044px;">DB Servers</span>
<span class="a t" style="left:571.9px;top:51px;font-size:11px;line-height:13px;color:#000;letter-spacing:-0.088px;">Site Configuration</span>
<span class="a t" style="left:677.8px;top:51px;font-size:11px;line-height:13px;color:#000;letter-spacing:0.108px;">Site Analysis</span>
<span class="a t" style="left:761.7px;top:51px;font-size:11px;line-height:13px;color:#000;letter-spacing:-0.143px;">Project Planning and Tracking</span>
<span class="a t" style="left:37.3px;top:83px;font-size:11px;line-height:13px;color:#000;letter-spacing:-0.267px;">Create Domain</span>
<span class="a t" style="left:134.7px;top:83px;font-size:11px;line-height:13px;color:#9a9a9a;letter-spacing:-0.283px;">Delete Domain</span>
<span class="a t" style="left:370.3px;top:83px;font-size:11px;line-height:13px;color:#000;letter-spacing:-0.138px;">Create Project</span>
<span class="a t" style="left:466.1px;top:83px;font-size:11px;line-height:13px;color:#000;letter-spacing:-0.250px;">Create Template</span>
<span class="a t" style="left:572.3px;top:83px;font-size:11px;line-height:13px;color:#000;letter-spacing:-0.580px;">Delete</span>
<span class="a t" style="left:635.0px;top:83px;font-size:11px;line-height:13px;color:#000;letter-spacing:-0.340px;">Rename</span>
<span class="a t" style="left:701.6px;top:83px;font-size:11px;line-height:13px;color:#000;letter-spacing:-0.333px;">Edit</span>
<span class="a t" style="left:746.8px;top:83px;font-size:11px;line-height:13px;color:#000;letter-spacing:-0.567px;">Ping</span>
<span class="a t" style="left:963.4px;top:83px;font-size:11px;line-height:13px;color:#000;letter-spacing:-0.050px;">Enable Versioning</span>
<span class="a t" style="left:47.6px;top:112px;font-size:11px;line-height:13px;font-weight:bold;color:#000;letter-spacing:-0.156px;">AUTOMATION</span>
<span class="a t" style="left:47.6px;top:131px;font-size:11px;line-height:13px;font-weight:bold;color:#000;letter-spacing:-0.600px;">DEFAULT</span>
<span class="a t" style="left:64.1px;top:150px;font-size:11px;line-height:13px;font-weight:bold;color:#000;letter-spacing:0.371px;">Projects</span>
<span class="a t" style="left:81.8px;top:169px;font-size:11px;line-height:13px;font-weight:bold;color:#000;letter-spacing:0.267px;">Automation</span>
<span class="a t" style="left:81.8px;top:188px;font-size:11px;line-height:13px;font-weight:bold;color:#000;letter-spacing:0.207px;">Automation_Release_Cycle_Req</span>
<span class="a t" style="left:82.0px;top:207px;font-size:11px;line-height:13px;font-weight:bold;color:#000;letter-spacing:0.217px;">Automation_Source_TestEntities</span>
<span class="a t" style="left:82.0px;top:226px;font-size:11px;line-height:13px;font-weight:bold;color:#000;letter-spacing:0.235px;">Automation_SourceProject</span>
<span class="a t" style="left:82.0px;top:245px;font-size:11px;line-height:13px;font-weight:bold;color:#000;letter-spacing:0.196px;">Automation_SourceProject1</span>
<span class="a t" style="left:82.0px;top:264px;font-size:11px;line-height:13px;font-weight:bold;color:#000;letter-spacing:0.310px;">Automation_SourceReleaseLookup</span>
<span class="a t" style="left:82.0px;top:283px;font-size:11px;line-height:13px;font-weight:bold;color:#000;letter-spacing:0.283px;">Automation_TargetProject</span>
<span class="a t" style="left:82.0px;top:302px;font-size:11px;line-height:13px;font-weight:bold;color:#000;letter-spacing:0.314px;">Automation_TargetReleaseLookup</span>
<span class="a t" style="left:82.0px;top:321px;font-size:11px;line-height:13px;font-weight:bold;color:#000;letter-spacing:0.255px;">Automation_TestEntities_Target</span>
<span class="a t" style="left:82.0px;top:340px;font-size:11px;line-height:13px;font-weight:bold;color:#000;letter-spacing:0.214px;">AutomationSourceProjectNoAudit</span>
<span class="a t" style="left:81.0px;top:359px;font-size:11px;line-height:13px;font-weight:bold;color:#000;letter-spacing:0.350px;">DemoProject</span>
<span class="a t" style="left:82.0px;top:378px;font-size:11px;line-height:13px;font-weight:bold;color:#000;letter-spacing:0.288px;">Jameleon_Automation_project</span>
<span class="a t" style="left:65.3px;top:397px;font-size:11px;line-height:13px;font-weight:bold;color:#000;letter-spacing:0.263px;">Template Projects</span>
<span class="a t" style="left:350.8px;top:128px;font-size:11px;line-height:13px;font-weight:bold;color:#1a1a80;letter-spacing:0.360px;">DemoProject</span>
<span class="a t" style="left:352.8px;top:180px;font-size:11px;line-height:13px;color:#000;letter-spacing:-0.186px;">Project Details</span>
<span class="a t" style="left:441.8px;top:180px;font-size:11px;line-height:13px;color:#000;letter-spacing:-0.058px;">Project Users</span>
<span class="a t" style="left:527.7px;top:180px;font-size:11px;line-height:13px;color:#000;letter-spacing:-0.088px;">Project Extensions</span>
<span class="a t" style="left:375.6px;top:210px;font-size:11px;line-height:13px;color:#000;letter-spacing:0.150px;">Add</span>
<span class="a t" style="left:433.4px;top:210px;font-size:11px;line-height:13px;color:#000;letter-spacing:-0.340px;">Remove</span>
<span class="a t" style="left:510.0px;top:209px;font-size:11px;line-height:13px;color:#000;letter-spacing:-0.200px;">Find</span>
<span class="a t" style="left:351.8px;top:240px;font-size:11px;line-height:13px;color:#000;letter-spacing:-0.225px;">User Name</span>
<span class="a t" style="left:520.8px;top:240px;font-size:11px;line-height:13px;color:#000;letter-spacing:-0.487px;">Full Name</span>
<span class="a t" style="left:690.6px;top:240px;font-size:11px;line-height:13px;color:#000;letter-spacing:-0.025px;">Project Administrator</span>
<span class="a t" style="left:351.8px;top:259px;font-size:11px;line-height:13px;color:#000;letter-spacing:-0.400px;">admin</span>
<span class="a t" style="left:350.8px;top:277px;font-size:11px;line-height:13px;color:#000;letter-spacing:0.371px;">syncuser</span>
<span class="a t" style="left:520.8px;top:277px;font-size:11px;line-height:13px;color:#000;letter-spacing:0.371px;">syncuser</span>
<span class="a t" style="left:348.1px;top:912px;font-size:11px;line-height:13px;font-weight:bold;color:#000;letter-spacing:0.158px;">Total Users :</span>
<span class="a t" style="left:416.6px;top:912px;font-size:11px;line-height:13px;color:#000;">2</span>
</body></html>
